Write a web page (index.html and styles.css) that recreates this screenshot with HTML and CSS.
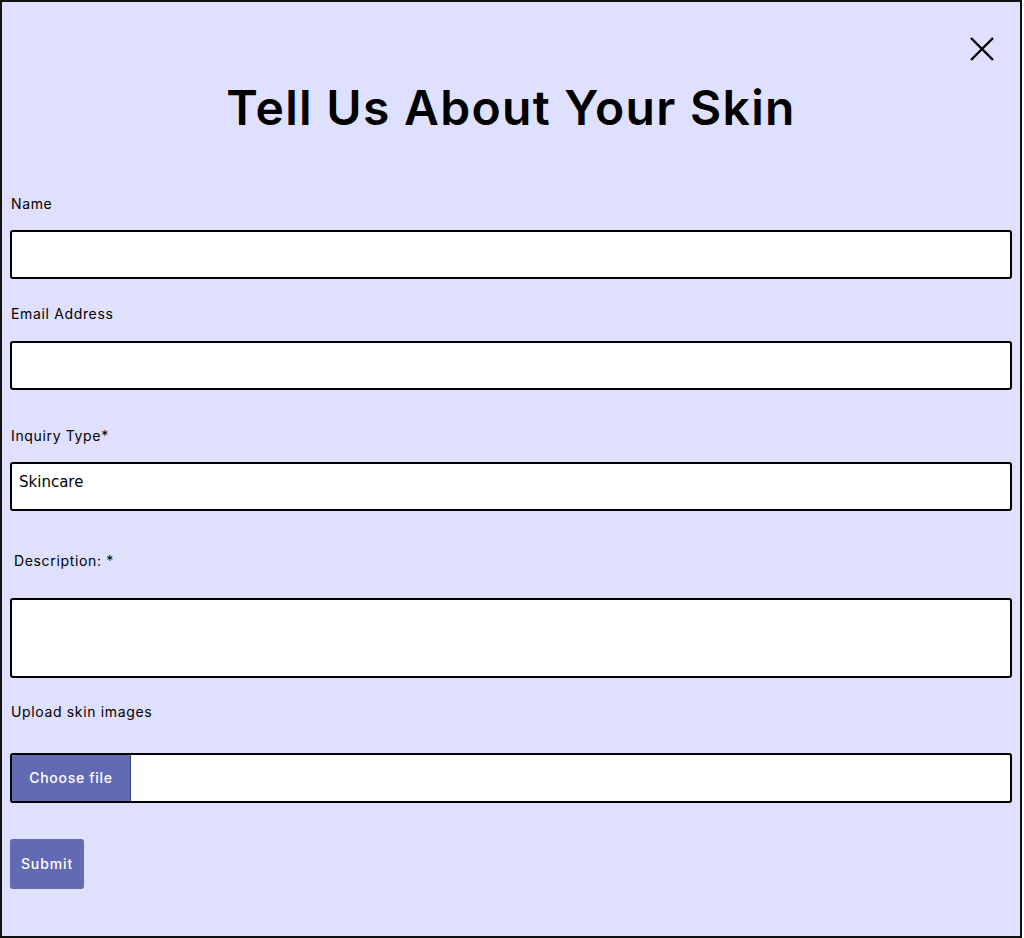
FILE: index.html
```html
<!DOCTYPE html>
<html lang="en">
<head>
<meta charset="utf-8">
<title>Tell Us About Your Skin</title>
<link rel="stylesheet" href="styles.css">
</head>
<body>
<div class="modal">
  <button class="close" aria-label="Close">
    <svg width="26" height="26" viewBox="0 0 26 26"><path d="M2 2 L24 24 M24 2 L2 24" stroke="#000" stroke-width="2.4" fill="none"/></svg>
  </button>
  <h1 class="title">Tell Us About Your Skin</h1>
  <form class="form">
    <label class="label l-name" for="name">Name</label>
    <input class="field" id="name" type="text">
    <label class="label l-email" for="email">Email Address</label>
    <input class="field" id="email" type="email">
    <label class="label l-type" for="type">Inquiry Type*</label>
    <select class="field select" id="type"><option>Skincare</option></select>
    <label class="label l-desc" for="desc">Description: *</label>
    <textarea class="field area" id="desc"></textarea>
    <label class="label l-upload" for="file">Upload skin images</label>
    <label class="field file" for="file"><span class="file-btn">Choose file</span><input id="file" type="file" class="file-input"></label>
    <button class="submit" type="submit">Submit</button>
  </form>
</div>
</body>
</html>
```
FILE: styles.css
```css
* { box-sizing: border-box; }
html, body { margin: 0; padding: 0; }
body { font-family: "Inter", "Noto Sans", sans-serif; background: #fff; }
.modal {
  position: relative;
  width: 1022px;
  height: 938px;
  background: #dee0fe;
  border: 2px solid #111;
  padding: 0 8px;
}
.close {
  position: absolute;
  top: 34px;
  right: 25px;
  background: none;
  border: 0;
  padding: 0;
  width: 26px;
  height: 26px;
  cursor: pointer;
}
.close svg { display: block; }
.title {
  margin: 0;
  padding-top: 76px;
  text-align: center;
  font-size: 48px;
  line-height: 60px;
  font-weight: 600;
  letter-spacing: 1.3px;
  color: #000;
}
.form { display: flex; flex-direction: column; align-items: flex-start; }
.label {
  display: block;
  font-size: 14px;
  line-height: 20px;
  letter-spacing: 0.65px;
  color: #000;
  padding-left: 1px;
}
.l-name { margin-top: 56px; margin-bottom: 16px; }
.l-email { margin-top: 25px; margin-bottom: 17px; }
.l-type { margin-top: 36px; margin-bottom: 16px; }
.l-desc { margin-top: 40px; margin-bottom: 27px; padding-left: 4px; }
.l-upload { margin-top: 24px; margin-bottom: 31px; }
.field {
  display: block;
  width: 1002px;
  height: 49px;
  border: 2px solid #000;
  border-radius: 3px;
  background: #fff;
  font: inherit;
  margin: 0;
}
.select {
  appearance: none;
  -webkit-appearance: none;
  font-family: "DejaVu Sans", Verdana, sans-serif;
  font-size: 15px;
  padding: 0 0 9px 7px;
  color: #000;
}
.area { height: 80px; resize: none; }
.file {
  display: flex;
  height: 50px;
  overflow: hidden;
  cursor: pointer;
}
.file-btn {
  width: 119px;
  background: #626ab3;
  color: #fff;
  font-size: 14px;
  font-weight: 500;
  letter-spacing: 0.7px;
  display: flex;
  align-items: center;
  justify-content: center;
  padding-bottom: 2px;
  border-right: 1px solid #3a3f6e;
}
.file-input { display: none; }
.submit {
  margin-top: 36px;
  width: 74px;
  height: 50px;
  background: #626ab3;
  color: #fff;
  border: 0;
  border-radius: 3px;
  font: inherit;
  font-size: 14px;
  font-weight: 500;
  letter-spacing: 0.9px;
  padding: 0 0 2px;
  cursor: pointer;
}
```
